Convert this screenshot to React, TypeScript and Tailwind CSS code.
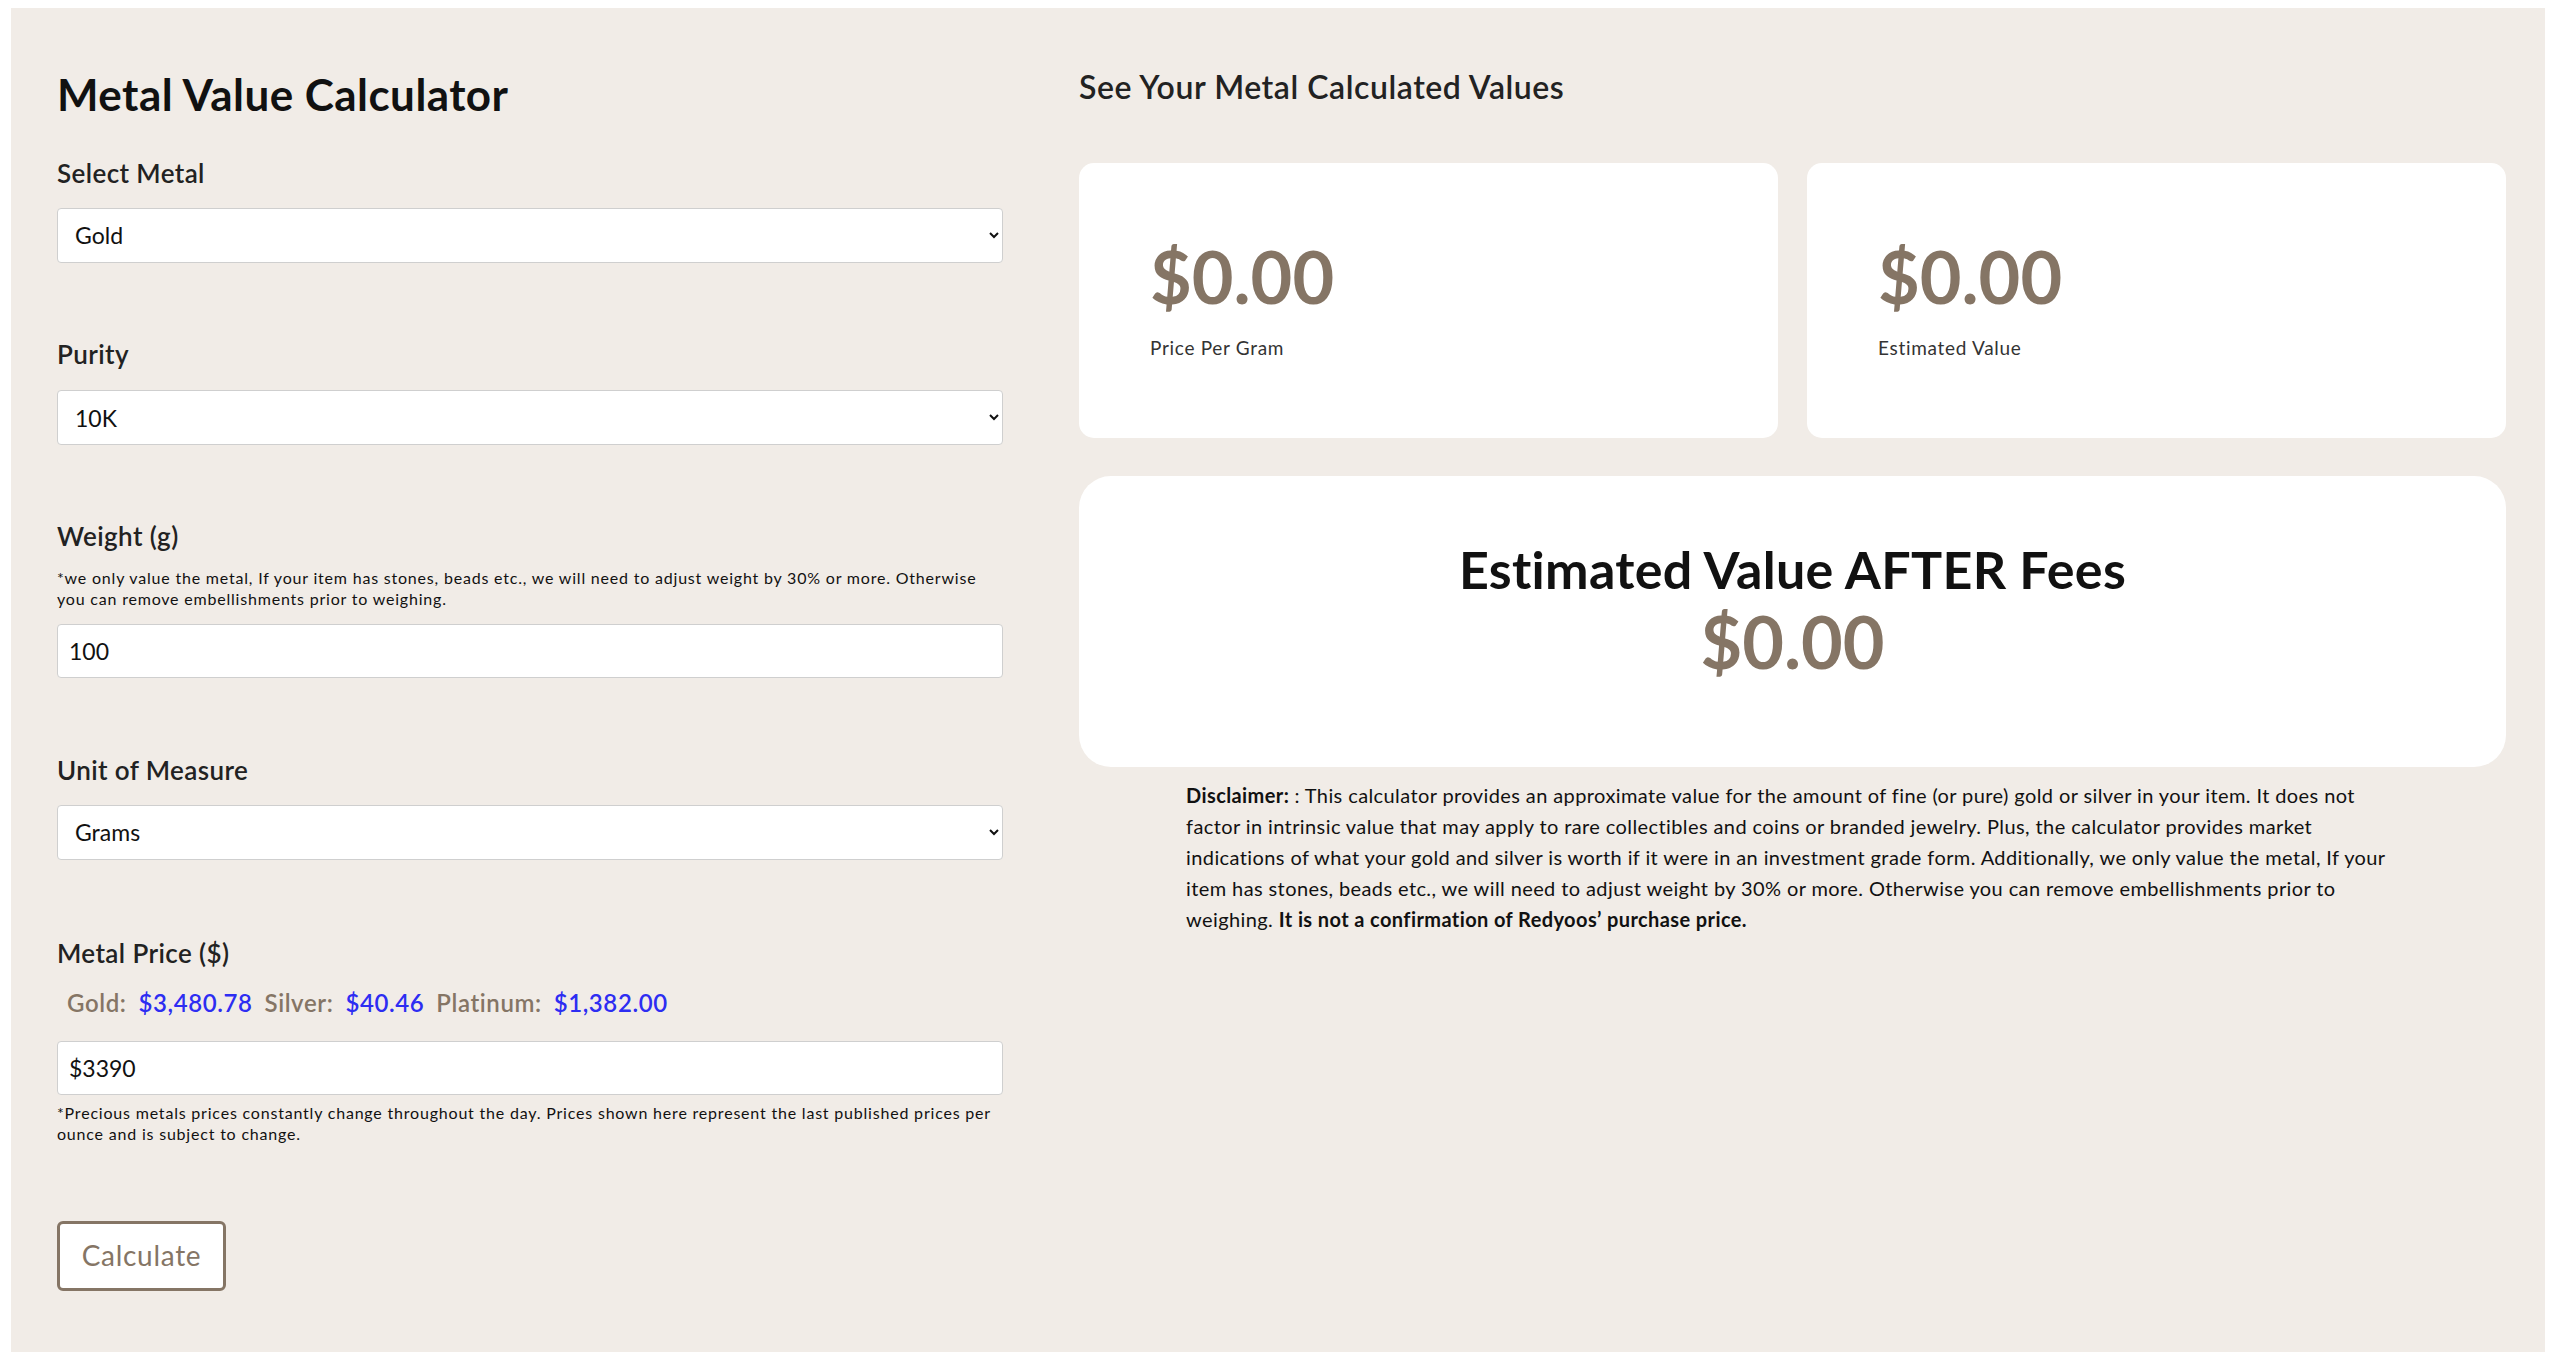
import { useState } from 'react';

const font = { fontFamily: 'Lato, "Open Sans", Arial, sans-serif' };

function FieldLabel({ children, className = '' }: { children: React.ReactNode; className?: string }) {
  return <div className={`text-[26px] font-semibold leading-[1.2] tracking-[0.4px] text-[#222] ${className}`}>{children}</div>;
}

function SelectBox({ value, options, className = '' }: { value: string; options: string[]; className?: string }) {
  const [val, setVal] = useState(value);
  return (
    <select
      value={val}
      onChange={(e) => setVal(e.target.value)}
      className={`block w-full h-[55px] rounded-[4px] border border-[#cfcfcf] bg-white pl-[13px] pr-[10px] text-[23px] leading-[1.2] text-[#111] ${className}`}
    >
      {options.map((o) => (
        <option key={o}>{o}</option>
      ))}
    </select>
  );
}

function TextBox({ value, className = '' }: { value: string; className?: string }) {
  const [val, setVal] = useState(value);
  return (
    <input
      value={val}
      onChange={(e) => setVal(e.target.value)}
      className={`block w-full h-[54px] rounded-[4px] border border-[#cfcfcf] bg-white px-[11px] text-[23px] leading-[1.2] text-[#111] ${className}`}
    />
  );
}

function ValueCard({ amount, label }: { amount: string; label: string }) {
  return (
    <div className="flex-1 h-[275px] rounded-[15px] bg-white pt-[70px] pl-[71px]">
      <div className="text-[72px] font-bold leading-[1.2] text-[#857565]">{amount}</div>
      <div className="mt-[17px] text-[19px] leading-[1.2] tracking-[0.7px] text-[#333]">{label}</div>
    </div>
  );
}

export default function App() {
  const prices = [
    { name: 'Gold:', value: '$3,480.78' },
    { name: 'Silver:', value: '$40.46' },
    { name: 'Platinum:', value: '$1,382.00' },
  ];

  return (
    <div className="min-h-screen bg-white pt-[8px]" style={font}>
      <div className="ml-[11px] mr-[8px] h-[1344px] bg-[#f1ece7] flex pl-[46px] pt-[60px]">
        {/* form column */}
        <div className="w-[946px] shrink-0">
          <h1 className="text-[44px] font-bold leading-[1.2] tracking-[0.45px] text-[#111]">Metal Value Calculator</h1>

          <FieldLabel className="mt-[37px]">Select Metal</FieldLabel>
          <SelectBox className="mt-[19px]" value="Gold" options={['Gold', 'Silver', 'Platinum']} />

          <FieldLabel className="mt-[76px]">Purity</FieldLabel>
          <SelectBox className="mt-[20px] h-[54px]" value="10K" options={['10K', '14K', '18K', '22K', '24K']} />

          <FieldLabel className="mt-[76px]">Weight (g)</FieldLabel>
          <p className="mt-[15px] text-[16px] leading-[21px] tracking-[0.8px] text-[#111]">
            *we only value the metal, If your item has stones, beads etc., we will need to adjust weight by 30% or more. Otherwise you can remove embellishments prior to weighing.
          </p>
          <TextBox className="mt-[15px]" value="100" />

          <FieldLabel className="mt-[77px]">Unit of Measure</FieldLabel>
          <SelectBox className="mt-[18px] h-[54px]" value="Grams" options={['Grams', 'Ounces', 'Pennyweight']} />

          <FieldLabel className="mt-[78px]">Metal Price ($)</FieldLabel>
          <div className="mt-[20px] flex items-baseline gap-[12px] pl-[10px] text-[24px] font-semibold leading-[1.2] tracking-[0.6px]">
            {prices.map((p) => (
              <span key={p.name} className="flex items-baseline gap-[12px]">
                <span className="text-[#857565]">{p.name}</span>
                <span className="text-[#2d2df2]">{p.value}</span>
              </span>
            ))}
          </div>
          <TextBox className="mt-[23px]" value="$3390" />
          <p className="mt-[7px] text-[16px] leading-[21.5px] tracking-[0.8px] text-[#111]">
            *Precious metals prices constantly change throughout the day. Prices shown here represent the last published prices per ounce and is subject to change.
          </p>

          <button className="mt-[76px] block w-[169px] h-[70px] rounded-[6px] border-[3px] border-[#857565] bg-white text-[28px] leading-[1.2] tracking-[0.7px] text-[#857565]">
            Calculate
          </button>
        </div>

        {/* results column */}
        <div className="ml-[76px] w-[1427px] shrink-0">
          <h2 className="text-[32px] font-semibold leading-[1.2] tracking-[0.55px] text-[#222]">See Your Metal Calculated Values</h2>

          <div className="mt-[57px] flex gap-[29px]">
            <ValueCard amount="$0.00" label="Price Per Gram" />
            <ValueCard amount="$0.00" label="Estimated Value" />
          </div>

          <div className="mt-[38px] h-[291px] rounded-[32px] bg-white pt-[62px] flex flex-col items-center">
            <div className="text-[52px] font-bold leading-[1.2] tracking-[0.3px] text-[#111]">Estimated Value AFTER Fees</div>
            <div className="-mt-[3px] text-[72px] font-bold leading-[1.2] text-[#857565]">$0.00</div>
          </div>

          <p className="mx-auto mt-[13px] w-[85%] text-[20px] leading-[31px] tracking-[0.4px] text-[#111]">
            <strong className="font-bold">Disclaimer: </strong>: This calculator provides an approximate value for the amount of fine (or pure) gold or silver in your item. It does not factor in intrinsic value that may apply to rare collectibles and coins or branded jewelry. Plus, the calculator provides market indications of what your gold and silver is worth if it were in an investment grade form. Additionally, we only value the metal, If your item has stones, beads etc., we will need to adjust weight by 30% or more. Otherwise you can remove embellishments prior to weighing. <strong className="font-bold">It is not a confirmation of Redyoos’ purchase price.</strong>
          </p>
        </div>
      </div>
    </div>
  );
}
